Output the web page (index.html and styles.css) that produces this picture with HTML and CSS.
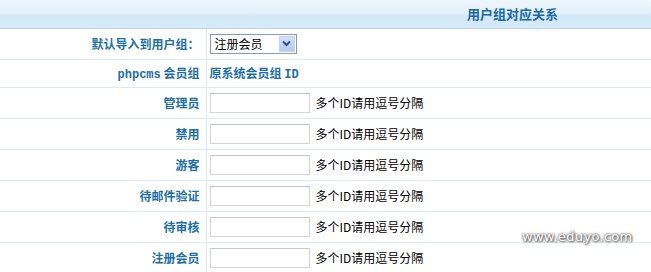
FILE: index.html
```html
<!DOCTYPE html>
<html lang="zh-CN">
<head>
  <meta charset="UTF-8">
  <title>用户组对应关系</title>
  <link rel="stylesheet" href="styles.css">
</head>
<body>

  <table class="map-table">
    <tr class="head-row">
      <th colspan="2"><span class="head-title">用户组对应关系</span></th>
    </tr>
    <tr class="first-row">
      <td class="label">默认导入到用户组：</td>
      <td class="field">
        <span class="select-wrap">
          <select class="group-select">
            <option>注册会员</option>
          </select>
          <span class="select-arrow">
            <svg width="9" height="7" viewBox="0 0 9 7"><path d="M1 1.5 L4.5 5 L8 1.5" fill="none" stroke="#2d4f8a" stroke-width="2"/></svg>
          </span>
        </span>
      </td>
    </tr>
    <tr class="sub-row">
      <td class="label"><span class="mono">phpcms</span> 会员组</td>
      <td class="field sub">原系统会员组 <span class="mono">ID</span></td>
    </tr>
    <tr>
      <td class="label">管理员</td>
      <td class="field"><input type="text" class="id-input"><span class="hint">多个ID请用逗号分隔</span></td>
    </tr>
    <tr>
      <td class="label">禁用</td>
      <td class="field"><input type="text" class="id-input"><span class="hint">多个ID请用逗号分隔</span></td>
    </tr>
    <tr>
      <td class="label">游客</td>
      <td class="field"><input type="text" class="id-input"><span class="hint">多个ID请用逗号分隔</span></td>
    </tr>
    <tr>
      <td class="label">待邮件验证</td>
      <td class="field"><input type="text" class="id-input"><span class="hint">多个ID请用逗号分隔</span></td>
    </tr>
    <tr>
      <td class="label">待审核</td>
      <td class="field"><input type="text" class="id-input"><span class="hint">多个ID请用逗号分隔</span></td>
    </tr>
    <tr>
      <td class="label">注册会员</td>
      <td class="field"><input type="text" class="id-input"><span class="hint">多个ID请用逗号分隔</span></td>
    </tr>
  </table>

  <div class="watermark">www.eduyo.com</div>

</body>
</html>
```

FILE: styles.css
```css
* {
  margin: 0;
  padding: 0;
  box-sizing: border-box;
}

body {
  background: #ffffff;
  font-family: "Noto Sans CJK SC", "DejaVu Sans", sans-serif;
  font-size: 12px;
  color: #000;
  position: relative;
  overflow: hidden;
}

.map-table {
  width: 100%;
  border-collapse: collapse;
}

.head-row th {
  height: 28px;
  background: linear-gradient(to bottom, #eef7fd 0%, #e3f1fa 45%, #d2e8f6 60%, #d6eaf7 100%);
  border-bottom: 1px solid #b9d5e6;
  text-align: left;
  padding: 0 0 0 467px;
}

.head-title {
  color: #1a68a6;
  font-size: 13px;
  font-weight: bold;
  letter-spacing: 0;
}

.map-table td {
  height: 31px;
  border-bottom: 1px solid #dce9f1;
  vertical-align: middle;
}

.map-table .sub-row td {
  height: 28px;
}

.label {
  width: 206px;
  text-align: right;
  padding-right: 6px;
  color: #1c6fa6;
  font-weight: bold;
  border-right: 1px solid #dce9f1;
}

.field {
  padding-left: 3px;
}

.field.sub {
  color: #1c6fa6;
  font-weight: bold;
}

.mono {
  font-family: "Liberation Mono", monospace;
  font-weight: bold;
}

.select-wrap {
  position: relative;
  display: inline-block;
  vertical-align: middle;
}

.group-select {
  appearance: none;
  -webkit-appearance: none;
  width: 87px;
  height: 20px;
  border: 1px solid #7f9db9;
  background: #fff;
  font-family: "Noto Sans CJK SC", sans-serif;
  font-size: 12px;
  padding: 0 0 0 4px;
  color: #000;
  display: block;
}

.select-arrow {
  position: absolute;
  right: 2px;
  top: 2px;
  width: 16px;
  height: 16px;
  background: linear-gradient(to bottom, #d6e0f6, #b7c8ee);
  border: 1px solid #c3d2ef;
  display: flex;
  align-items: center;
  justify-content: center;
}

.id-input {
  width: 100px;
  height: 20px;
  border: 1px solid #d4d4d4;
  border-top-color: #c8c8c8;
  background: #fff;
  vertical-align: middle;
}

.hint {
  margin-left: 6px;
  vertical-align: middle;
}

.watermark {
  position: absolute;
  left: 522px;
  top: 229px;
  color: #fff;
  font-family: "DejaVu Sans", sans-serif;
  font-size: 13px;
  letter-spacing: 0.3px;
  text-shadow: 0 0 2px #555, 0 0 3px #777, 1px 1px 2px #666;
}
```
